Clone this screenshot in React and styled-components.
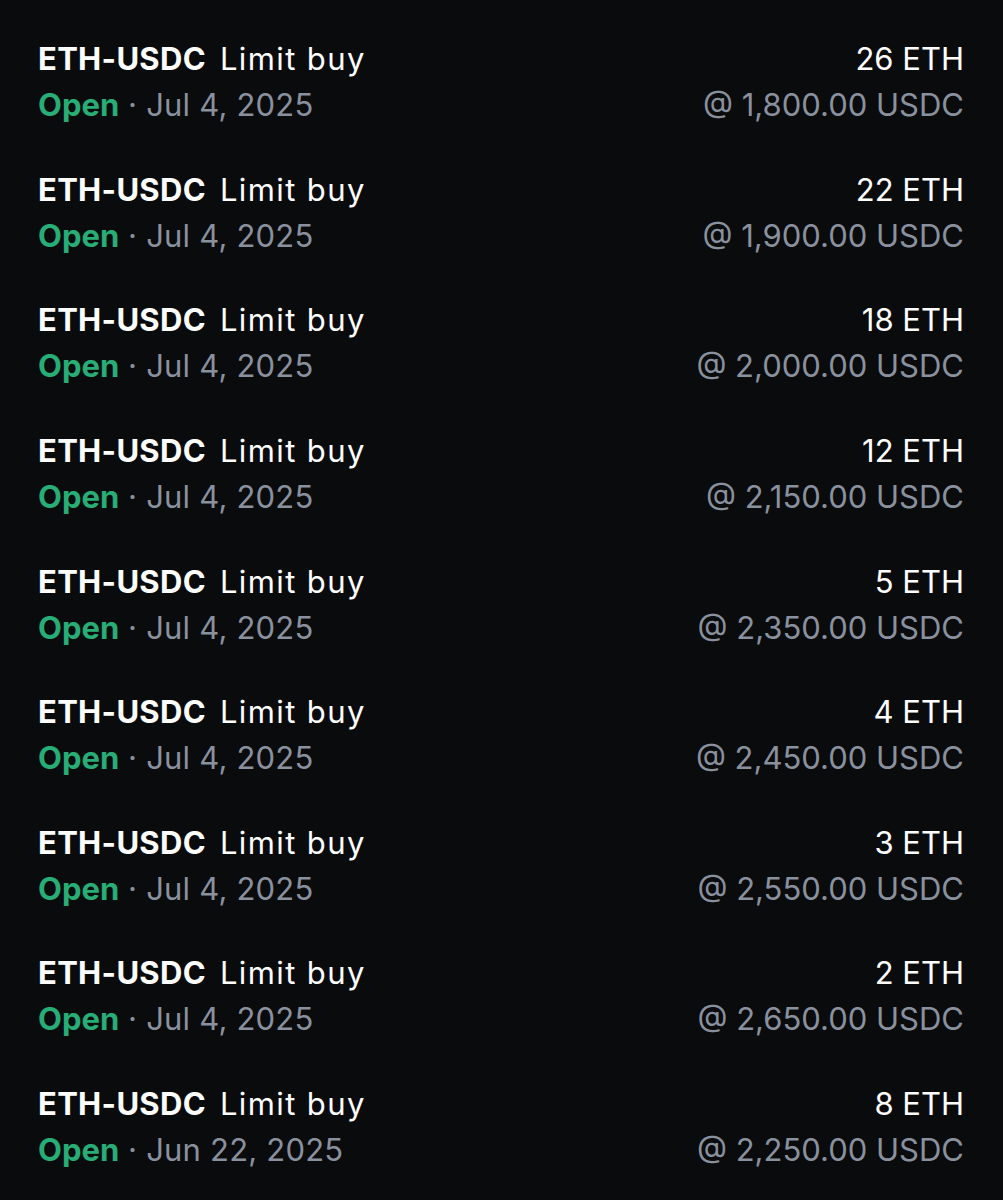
import React from "react";
import styled, { createGlobalStyle } from "styled-components";

const GlobalStyle = createGlobalStyle`
  html, body {
    margin: 0;
    padding: 0;
    background: #0a0b0d;
  }
  body {
    font-family: Inter, "Noto Sans", sans-serif;
    -webkit-font-smoothing: antialiased;
  }
`;

const Page = styled.div`
  width: 1003px;
  height: 1200px;
  background: #0a0b0d;
  padding: 17px 39px 0 38px;
  box-sizing: border-box;
  overflow: hidden;
`;

const List = styled.div`
  display: flex;
  flex-direction: column;
`;

const Row = styled.div`
  display: flex;
  justify-content: space-between;
  padding: 19.3px 0;
`;

const Side = styled.div`
  display: flex;
  flex-direction: column;
  align-items: ${({ $right }) => ($right ? "flex-end" : "flex-start")};
`;

const Line = styled.div`
  height: 46px;
  line-height: 46px;
  font-size: 31px;
  white-space: nowrap;
`;

const Pair = styled.span`
  color: #ffffff;
  font-weight: 700;
  letter-spacing: 0.3px;
  margin-right: 14px;
`;

const Kind = styled.span`
  color: #ffffff;
  font-weight: 400;
  letter-spacing: 1.4px;
`;

const Status = styled.span`
  color: #27ad75;
  font-weight: 700;
`;

const Muted = styled.span`
  color: #8a919e;
  font-weight: 400;
  letter-spacing: ${({ $spacing }) => $spacing || "0.2px"};
`;

const Amount = styled.span`
  color: #ffffff;
  font-weight: 400;
`;

const orders = [
  { amount: 26, price: "1,800.00", date: "Jul 4, 2025" },
  { amount: 22, price: "1,900.00", date: "Jul 4, 2025" },
  { amount: 18, price: "2,000.00", date: "Jul 4, 2025" },
  { amount: 12, price: "2,150.00", date: "Jul 4, 2025" },
  { amount: 5, price: "2,350.00", date: "Jul 4, 2025" },
  { amount: 4, price: "2,450.00", date: "Jul 4, 2025" },
  { amount: 3, price: "2,550.00", date: "Jul 4, 2025" },
  { amount: 2, price: "2,650.00", date: "Jul 4, 2025" },
  { amount: 8, price: "2,250.00", date: "Jun 22, 2025" },
];

const App = () => (
  <>
    <GlobalStyle />
    <Page>
      <List>
        {orders.map((o, i) => (
          <Row key={i}>
            <Side>
              <Line>
                <Pair>ETH-USDC</Pair>
                <Kind>Limit buy</Kind>
              </Line>
              <Line>
                <Status>Open</Status>
                <Muted> · {o.date}</Muted>
              </Line>
            </Side>
            <Side $right>
              <Line>
                <Amount>{o.amount} ETH</Amount>
              </Line>
              <Line>
                <Muted $spacing="0px">@ {o.price} USDC</Muted>
              </Line>
            </Side>
          </Row>
        ))}
      </List>
    </Page>
  </>
);

export default App;
